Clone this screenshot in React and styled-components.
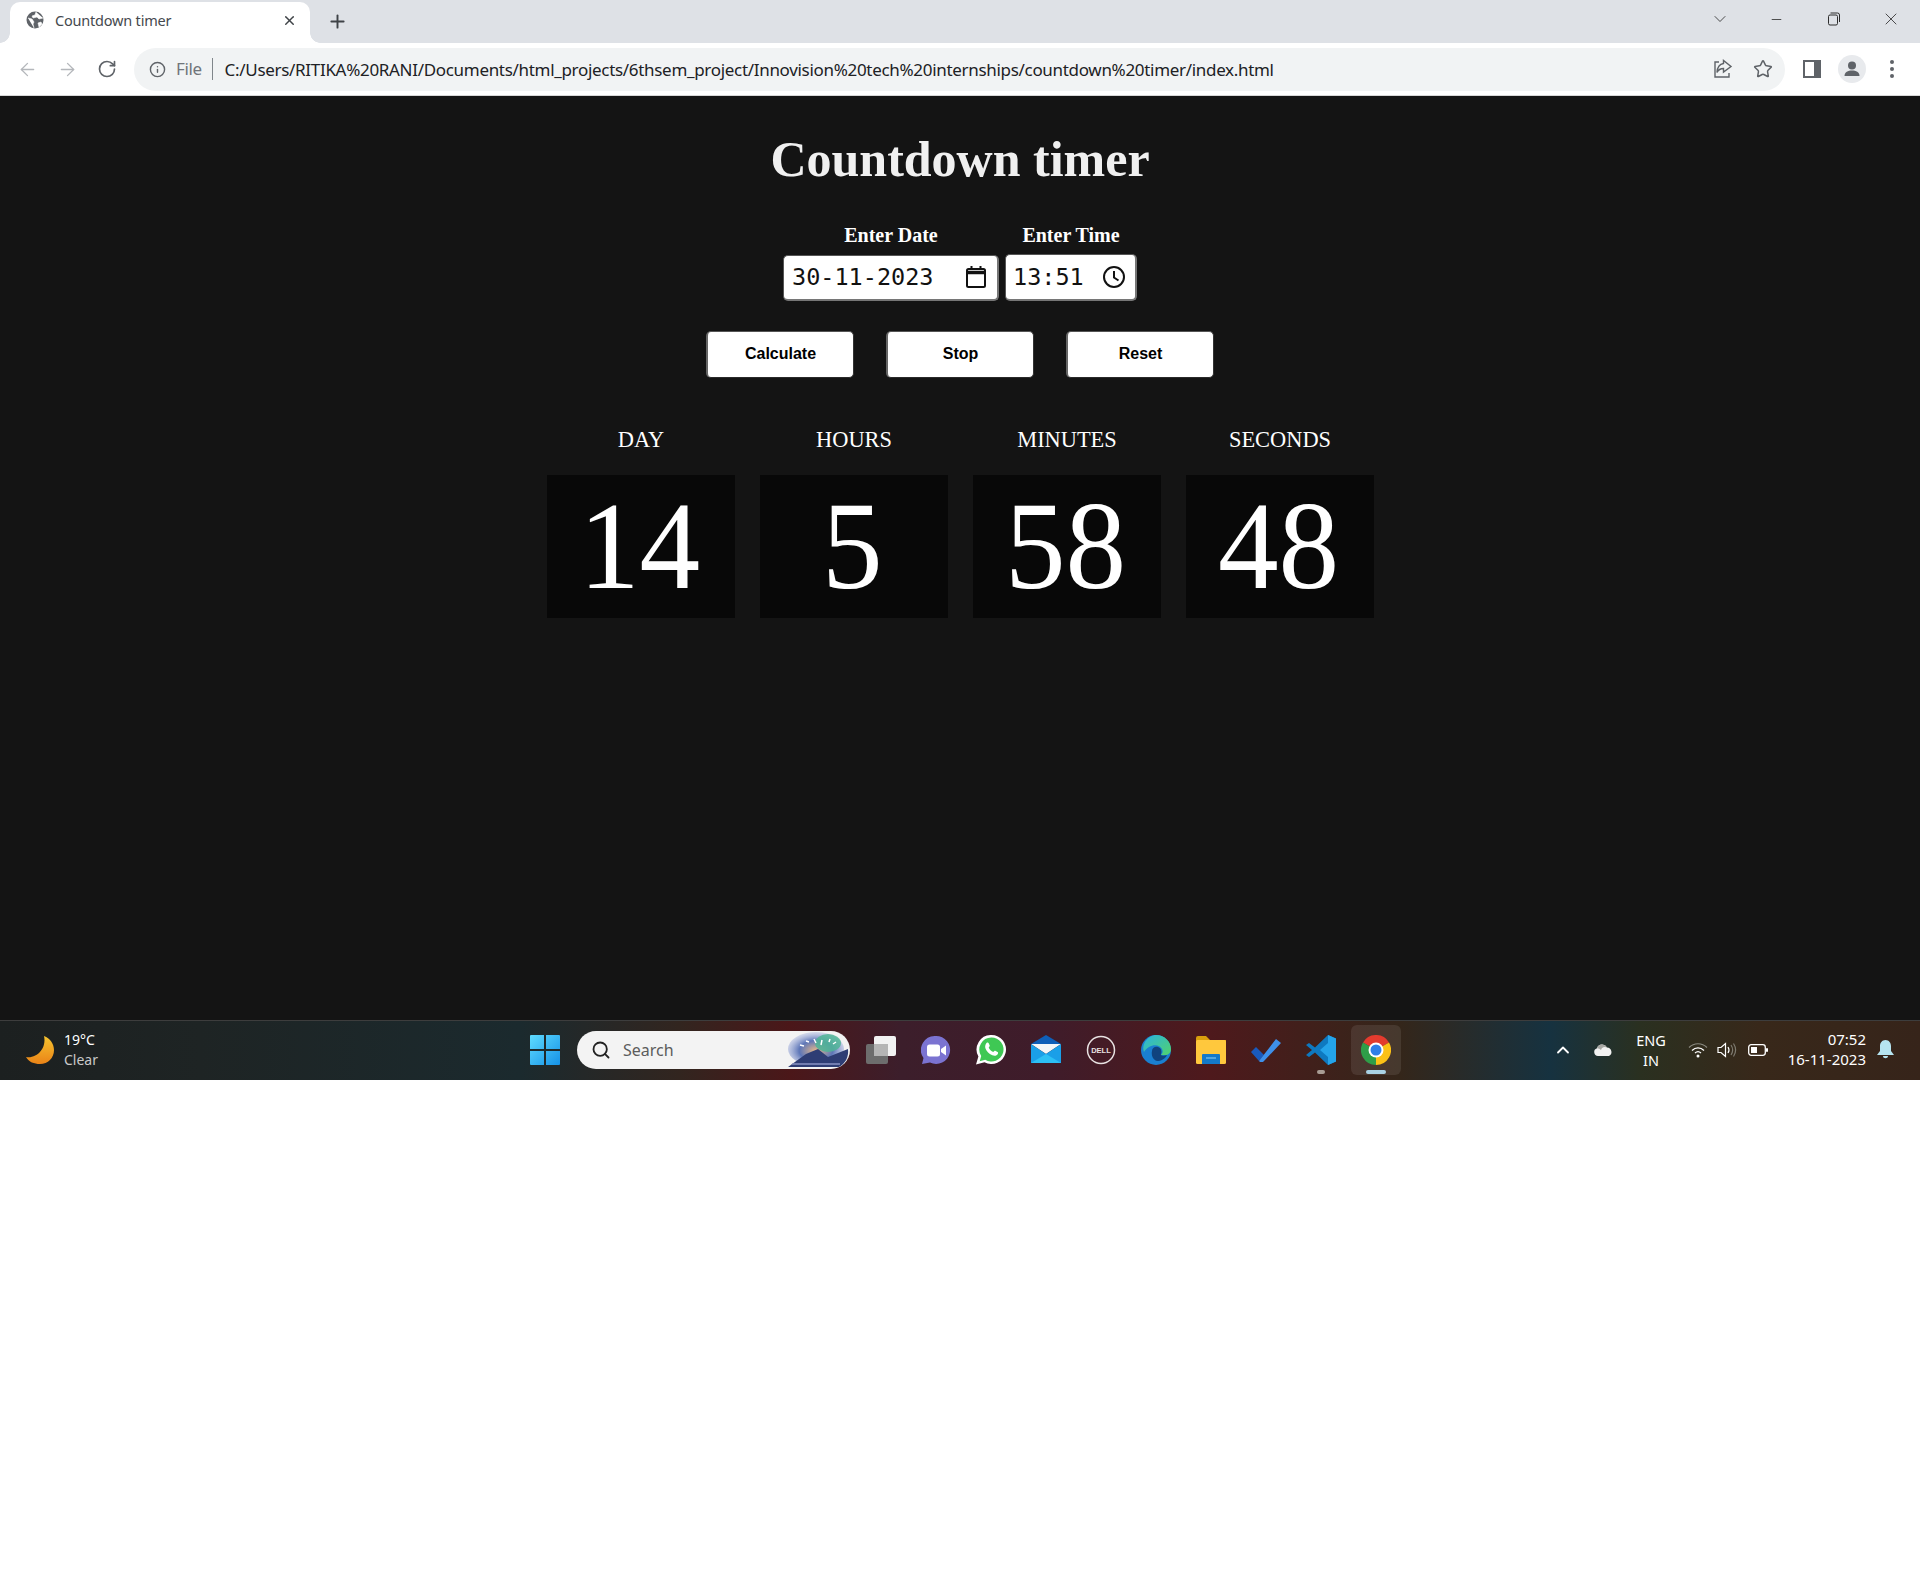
import React from "react"
import styled, { createGlobalStyle } from "styled-components"
import { ArrowLeft, ArrowRight, RotateCw, Info, Star, X, Plus, Minus, ChevronDown, ChevronUp, Search as SearchIcon } from "lucide-react"

const GlobalStyle = createGlobalStyle`
  html, body { margin: 0; padding: 0; background: #fff; }
  #root { width: 1920px; height: 1596px; overflow: hidden; }
`

const UI_FONT = `"Noto Sans", "Open Sans", sans-serif`

const TabStrip = styled.div`
  height: 43px;
  background: #dee1e6;
  display: flex;
  align-items: flex-end;
  padding-left: 10px;
  position: relative;
`
const Tab = styled.div`
  position: relative;
  width: 300px;
  height: 41px;
  background: #fff;
  border-radius: 10px 10px 0 0;
  display: flex;
  align-items: center;
  padding: 0 13px 5px 16px;
  box-sizing: border-box;
  gap: 11px;
  font: 400 14.5px ${UI_FONT};
  color: #45494e;
  &::before, &::after {
    content: "";
    position: absolute;
    bottom: 0;
    width: 10px;
    height: 10px;
    background: radial-gradient(circle at 0 0, #dee1e6 9.5px, #fff 10px);
  }
  &::before { left: -10px; }
  &::after { right: -10px; background: radial-gradient(circle at 100% 0, #dee1e6 9.5px, #fff 10px); }
`
const TabTitle = styled.span`
  flex: 1;
  letter-spacing: -0.2px;
`
const NewTab = styled.div`
  margin: 0 0 3px 17px;
  height: 38px;
  display: flex;
  align-items: center;
  color: #3f4347;
`
const WindowControls = styled.div`
  margin-left: auto;
  height: 43px;
  display: flex;
  align-items: flex-start;
  color: #2c2c2c;
`
const WindowButton = styled.div`
  width: ${p => p.$w || 57}px;
  height: 38px;
  display: flex;
  align-items: center;
  justify-content: center;
`
const Toolbar = styled.div`
  height: 52px;
  background: #fff;
  display: flex;
  align-items: center;
  border-bottom: 1px solid #d8d8d8;
  padding-left: 7px;
  color: #5f6368;
`
const NavButton = styled.div`
  width: 40px;
  display: flex;
  justify-content: center;
  color: ${p => (p.$off ? "#b4b7bb" : "#5f6368")};
`
const Omnibox = styled.div`
  width: 1651px;
  height: 43px;
  margin-left: 7px;
  border-radius: 22px;
  background: #f1f3f4;
  display: flex;
  align-items: center;
  padding-left: 15px;
  box-sizing: border-box;
  font: 400 17px ${UI_FONT};
`
const FileLabel = styled.span`
  margin-left: 10px;
  color: #70757a;
  padding-right: 10px;
  border-right: 1px solid #80868b;
  line-height: 22px;
  letter-spacing: -0.4px;
`
const Url = styled.span`
  margin-left: 12px;
  color: #202124;
  letter-spacing: -0.31px;
  flex: 1;
  white-space: nowrap;
`
const OmniIcons = styled.div`
  display: flex;
  align-items: center;
  gap: 20px;
  padding-right: 12px;
`
const ToolbarIcons = styled.div`
  display: flex;
  align-items: center;
  margin-left: 7px;
`
const ToolIcon = styled.div`
  width: 40px;
  display: flex;
  justify-content: center;
`

const Page = styled.main`
  height: 924px;
  background: #141414;
  display: flex;
  flex-direction: column;
  align-items: center;
  overflow: hidden;
`
const Title = styled.h1`
  margin: 35px 0 0;
  font: 700 50px/1.15 "Liberation Serif", serif;
  color: #f0f0f0;
`
const Fields = styled.div`
  margin-top: 35px;
  display: flex;
  align-items: flex-start;
  gap: 6px;
`
const Field = styled.div`
  display: flex;
  flex-direction: column;
  align-items: center;
`
const FieldLabel = styled.label`
  font: 700 20px/22px "Liberation Serif", serif;
  color: #fff;
  margin-bottom: ${p => p.$gap}px;
`
const Input = styled.div`
  width: ${p => p.$w}px;
  height: ${p => p.$h}px;
  box-sizing: border-box;
  background: #fff;
  border-style: solid;
  border-width: 1px 2px 2px 1px;
  border-color: #555 #767676 #767676 #555;
  border-radius: 5px;
  display: flex;
  align-items: center;
  justify-content: space-between;
  padding: 0 10px 0 ${p => p.$pad}px;
  font: 400 23.5px "DejaVu Sans Mono", monospace;
  color: #111;
`
const Buttons = styled.div`
  margin-top: 30px;
  display: flex;
  gap: 32px;
`
const Button = styled.button`
  width: 148px;
  height: 47px;
  background: #fff;
  border-style: solid;
  border-width: 1px 1px 1px 2px;
  border-color: #555 #333 #2a2a2a #666;
  border-radius: 5px;
  font: 700 16px "Liberation Sans", sans-serif;
  color: #000;
  padding: 0;
`
const Clock = styled.section`
  margin-top: 49px;
  display: grid;
  grid-template-columns: repeat(4, 187.5px);
  column-gap: 25.5px;
  margin-left: 1px;
`
const Unit = styled.div`
  display: flex;
  flex-direction: column;
  align-items: center;
`
const UnitLabel = styled.div`
  font: 400 22.4px/26px "Liberation Serif", serif;
  color: #fff;
  margin-bottom: 22px;
`
const Digits = styled.div`
  width: 100%;
  height: 143px;
  box-sizing: border-box;
  padding-right: 3px;
  background: #080808;
  display: flex;
  align-items: center;
  justify-content: center;
  font: 400 125px/143px "Liberation Serif", serif;
  color: #fff;
`
const DigitText = styled.span`
  display: inline-block;
  transform: scaleX(0.97);
`

const Taskbar = styled.footer`
  height: 60px;
  box-sizing: border-box;
  border-top: 1px solid #3d3d3d;
  padding-bottom: 2px;
  display: flex;
  align-items: center;
  background: linear-gradient(90deg, #1c2020 0, #1e2424 200px, #1b2a2e 520px, #32251f 680px, #4b1719 790px, #3c1e2b 900px, #3f1c2a 1050px, #4e191c 1210px, #34261a 1400px, #163240 1550px, #2a3020 1640px, #38281a 1760px, #36241a 1920px);
  color: #fff;
  font: 400 14px/20px ${UI_FONT};
`
const Weather = styled.div`
  width: 530px;
  flex: none;
  box-sizing: border-box;
  padding-left: 26px;
  display: flex;
  align-items: center;
  gap: 10px;
`
const WeatherText = styled.div`
  line-height: 20px;
  span { display: block; }
  span + span { color: #c9c9c9; }
`
const StartIcon = styled.div`
  width: 47px;
  display: flex;
  flex: none;
`
const SearchBox = styled.div`
  width: 273px;
  height: 38px;
  box-sizing: border-box;
  border-radius: 19px;
  background: #f3f3f3;
  color: #5c5c5c;
  display: flex;
  align-items: center;
  padding-left: 14px;
  gap: 12px;
  font-size: 16px;
  overflow: hidden;
  flex: none;
`
const SearchArt = styled.div`
  margin-left: auto;
  display: flex;
`
const AppSlot = styled.div`
  position: relative;
  width: 55px;
  height: 50px;
  flex: none;
  display: flex;
  align-items: center;
  justify-content: center;
  &::before {
    content: "";
    display: ${p => (p.$active ? "block" : "none")};
    position: absolute;
    inset: 0 2.5px;
    border-radius: 6px;
    background: rgba(255, 255, 255, 0.09);
  }
  svg { position: relative; }
  &::after {
    content: "";
    display: ${p => (p.$dot ? "block" : "none")};
    position: absolute;
    bottom: 1px;
    left: 50%;
    transform: translateX(-50%);
    width: ${p => (p.$dot === "wide" ? 20 : 8)}px;
    height: 4px;
    border-radius: 2px;
    background: ${p => (p.$dot === "wide" ? "#a9d2e4" : "#a89c94")};
  }
`
const Apps = styled.div`
  display: flex;
  align-items: center;
  margin-left: 3px;
`
const Tray = styled.div`
  margin-left: auto;
  display: flex;
  align-items: center;
  padding-right: 16px;
`
const TrayIcon = styled.div`
  display: flex;
  width: ${p => p.$w}px;
  justify-content: center;
  flex: none;
`
const Lang = styled.div`
  width: 56px;
  flex: none;
  text-align: center;
  font-size: 14.5px;
  line-height: 20px;
`
const DateTime = styled.div`
  width: 87px;
  flex: none;
  text-align: right;
  font-size: 15px;
  line-height: 20px;
  white-space: nowrap;
  padding-bottom: 2px;
`
const Rest = styled.div`
  height: 516px;
  background: #fff;
`

const Globe = () => (
  <svg width="18" height="18" viewBox="0 0 18 18">
    <circle cx="9" cy="9" r="8.5" fill="#5f6368" />
    <path d="M2 7l4 1 2 3-1 2 1 4M10 1l-1 3-3 1 1 2 4-1 2 2 4-1M12 12l3-1 1 2-3 3z" fill="#fff" stroke="#fff" strokeWidth=".6" />
  </svg>
)
const Restore = () => (
  <svg width="14" height="14" viewBox="0 0 14 14" fill="none" stroke="#2c2c2c" strokeWidth="1">
    <rect x="1.5" y="3" width="9" height="10" rx="1.5" />
    <path d="M3.5 1h7a2 2 0 0 1 2 2v7" />
  </svg>
)
const Share = () => (
  <svg width="20" height="20" viewBox="0 0 20 20" fill="none" stroke="#5f6368" strokeWidth="1.4">
    <path d="M6 3H2v15h14v-4" />
    <path d="M10.5 4.5V1.5l7.5 6-7.5 5.5V9.5c-3 0-5 1-6.5 4 .3-5 3-8.5 6.5-9z" />
  </svg>
)
const Panel = () => (
  <svg width="18" height="18" viewBox="0 0 18 18">
    <path fillRule="evenodd" d="M0 0h18v18H0zM2 2v14h9V2z" fill="#5f6368" />
  </svg>
)
const Avatar = () => (
  <svg width="28" height="28" viewBox="0 0 28 28">
    <circle cx="14" cy="14" r="14" fill="#e8eaed" />
    <circle cx="14" cy="10.5" r="4" fill="#5f6368" />
    <path d="M6.5 21c0-4 3.5-5.500 7.500-5.500s7.500 1.500 7.500 5.500z" fill="#5f6368" />
  </svg>
)
const Dots = () => (
  <svg width="6" height="20" viewBox="0 0 6 20" fill="#5f6368">
    <circle cx="3" cy="3" r="2" />
    <circle cx="3" cy="10" r="2" />
    <circle cx="3" cy="17" r="2" />
  </svg>
)
const Calendar = () => (
  <svg width="22" height="24" viewBox="0 0 22 24" fill="none" stroke="#111" strokeWidth="2">
    <rect x="2" y="4" width="18" height="18" rx="1.5" />
    <path d="M2 7.500h18" strokeWidth="3.500" />
    <path d="M6.500 1v4M15.500 1v4" />
  </svg>
)
const ClockIcon = () => (
  <svg width="22" height="22" viewBox="0 0 22 22" fill="none" stroke="#111" strokeWidth="2">
    <circle cx="11" cy="11" r="10" />
    <path d="M11 5v6.500l4.500 3" />
  </svg>
)
const Moon = () => (
  <svg width="28" height="28" viewBox="0 0 28 28">
    <defs>
      <linearGradient id="moon" x1="0" y1="0" x2="0" y2="1">
        <stop offset="0" stopColor="#f6c42f" />
        <stop offset="1" stopColor="#ea8317" />
      </linearGradient>
    </defs>
    <path d="M18 0c6 2 10 8 10 14 0 8-6 14-14 14C8 28 3 26 0 21c10 2 21-8 18-21z" fill="url(#moon)" />
  </svg>
)
const WinLogo = () => (
  <svg width="30" height="30" viewBox="0 0 30 30">
    <defs>
      <linearGradient id="win" x1="0" y1="0" x2="1" y2="1">
        <stop offset="0" stopColor="#5fdcff" />
        <stop offset="1" stopColor="#1591e6" />
      </linearGradient>
    </defs>
    <path d="M0 1a1 1 0 0 1 1-1h13v14H0zM16 0h13a1 1 0 0 1 1 1v13H16zM0 16h14v14H1a1 1 0 0 1-1-1zM16 16h14v13a1 1 0 0 1-1 1H16z" fill="url(#win)" />
  </svg>
)
const SearchDecor = () => (
  <svg width="64" height="38" viewBox="0 0 64 38">
    <defs>
      <radialGradient id="sky" cx=".5" cy=".55" r=".6">
        <stop offset="0" stopColor="#e8b98a" />
        <stop offset=".5" stopColor="#5d76b8" />
        <stop offset="1" stopColor="#bcc4e8" stopOpacity=".3" />
      </radialGradient>
    </defs>
    <ellipse cx="30" cy="18" rx="28" ry="17" fill="url(#sky)" />
    <ellipse cx="42" cy="12" rx="13" ry="9" fill="#4fb596" opacity=".85" />
    <path d="M20 10l3 1M28 8l2 4M36 9l-1 5M44 8l-1 3M50 11l-3 2M14 14l4 1" stroke="#fff" strokeWidth="1.500" />
    <path d="M2 36l18-13 12-5 10 8 20-8c1 8-3 15-9 18z" fill="#2e3d74" />
    <path d="M6 33h48" stroke="#8a93c5" strokeWidth="1.500" />
  </svg>
)
const TaskView = () => (
  <svg width="30" height="28" viewBox="0 0 30 28">
    <rect x="0" y="8" width="22" height="20" rx="2" fill="#6d6d6d" />
    <rect x="8" y="0" width="22" height="20" rx="2" fill="#f2f2f2" />
    <rect x="8" y="8" width="14" height="12" fill="#b5b5b5" />
  </svg>
)
const Meet = () => (
  <svg width="30" height="30" viewBox="0 0 30 30">
    <path d="M15 1a14 14 0 1 1-6 26.600L1 29l1.500-6A14 14 0 0 1 15 1z" fill="#7b73d1" />
    <rect x="6" y="9.500" width="13" height="12" rx="2.500" fill="#fff" />
    <path d="M20 14l5-3.500v10L20 17z" fill="#fff" />
  </svg>
)
const WhatsApp = () => (
  <svg width="30" height="30" viewBox="0 0 30 30">
    <path d="M15.500 0a14.500 14.500 0 1 1-7 27.200L0 29.500l2.400-8A14.500 14.500 0 0 1 15.500 0z" fill="#fff" />
    <path d="M15.500 2.500a12 12 0 1 1-6.300 22.200l-5.500 1.500 1.500-5.300A12 12 0 0 1 15.500 2.500z" fill="#3fc854" />
    <path d="M10.500 8c1-.8 1.800-.5 2.200.3l1 2.200c.2.600-.5 1.300-1 2 .8 2 2.500 3.600 4.600 4.500.7-.7 1.300-1.500 2-1.200l2.200 1.100c.7.300.8 1 .3 2-1 1.700-3 2.200-5.500 1.300-3.500-1.300-6-4-7-7.200-.4-2 .2-3.900 1.200-5z" fill="#fff" />
  </svg>
)
const Mail = () => (
  <svg width="30" height="30" viewBox="0 0 30 30">
    <path d="M15 0l15 9H0z" fill="#0f5fb8" />
    <path d="M0 9h30L15 19z" fill="#f4f6f8" />
    <path d="M0 9l15 10L30 9v19H0z" fill="#1a9fe8" />
    <path d="M0 28l15-9 15 9z" fill="#2cc0f5" />
  </svg>
)
const Dell = () => (
  <svg width="30" height="30" viewBox="0 0 30 30">
    <circle cx="15" cy="15" r="13.500" fill="none" stroke="#e8e2e2" strokeWidth="1.500" />
    <text x="15" y="17.500" textAnchor="middle" fontFamily="Liberation Sans, sans-serif" fontWeight="700" fontSize="7.500" fill="#e8e2e2">DELL</text>
  </svg>
)
const Edge = () => (
  <svg width="30" height="30" viewBox="0 0 30 30">
    <defs>
      <linearGradient id="edgeA" x1="0" y1="0" x2="1" y2="1">
        <stop offset="0" stopColor="#2ab3e0" />
        <stop offset="1" stopColor="#52d26c" />
      </linearGradient>
    </defs>
    <circle cx="15" cy="15" r="15" fill="#1a7fd0" />
    <path d="M3 9C6 2 12 0 15 0c9 0 15 7 15 14 0 4-3 6-6 6h-4c2-2 2-4 1-6-2-4-8-5-13-2-2 1-4 3-5 5-1-3-1-5 0-8z" fill="url(#edgeA)" />
    <path d="M11 16c0-3 3-5 6-4 3 1 4 4 3 7-1 2 3 2 6 1-2 4-6 6-10 6-4-1-6-6-5-10z" fill="#10437e" />
  </svg>
)
const Folder = () => (
  <svg width="30" height="28" viewBox="0 0 30 28">
    <path d="M0 2a2 2 0 0 1 2-2h8l4 4h16v4H0z" fill="#d99e0d" />
    <rect x="0" y="4" width="30" height="24" rx="1.500" fill="#ffc83d" />
    <path d="M6 19a1 1 0 0 1 1-1h16a1 1 0 0 1 1 1v9H6z" fill="#1479c9" />
    <path d="M10 22h10" stroke="#7cc4ee" strokeWidth="1.200" />
  </svg>
)
const Todo = () => (
  <svg width="30" height="24" viewBox="0 0 30 24">
    <path d="M0 14l5-5 8 8-5 6z" fill="#195abd" />
    <path d="M8 23L25 1l5 4-17 18a3 3 0 0 1-5 0z" fill="#3e90ea" />
  </svg>
)
const VSCode = () => (
  <svg width="30" height="30" viewBox="0 0 30 30">
    <path d="M22 0l8 3.500v23L22 30 9 17.500 3 22l-3-2 6-5-6-5 3-2 6 4.500z" fill="#0e79c0" />
    <path d="M22 0l8 3.500v23L22 30zM22 8l-8 7 8 7z" fill="#24a4ea" fillRule="evenodd" />
  </svg>
)
const Chrome = () => (
  <svg width="30" height="30" viewBox="0 0 30 30">
    <path d="M15 15L2 7.500A15 15 0 0 1 28 7.500z" fill="#e33b2e" />
    <path d="M15 15L2 7.500A15 15 0 0 0 15 30z" fill="#2f9e48" />
    <path d="M15 15L28 7.500A15 15 0 0 1 15 30z" fill="#fbc116" />
    <circle cx="15" cy="15" r="7.500" fill="#fff" />
    <circle cx="15" cy="15" r="5.500" fill="#2f7fe8" />
  </svg>
)
const Cloud = () => (
  <svg width="20" height="14" viewBox="0 0 20 14">
    <path d="M5 13a4 4 0 0 1-1-7.800 5.500 5.500 0 0 1 10-.7A4.500 4.500 0 0 1 16 13z" fill="#f2f2f2" />
    <path d="M4 5.200a5.500 5.500 0 0 1 10-.7 4 4 0 0 0-6 2.500 5 5 0 0 0-4-1.800z" fill="#a8a8a4" />
  </svg>
)
const Wifi = () => (
  <svg width="20" height="16" viewBox="0 0 20 16" fill="none" stroke="#fff">
    <path d="M1 5.500c5-5 13-5 18 0" stroke="#8a8a80" strokeWidth="1.200" />
    <path d="M4 8.500c3.500-3.500 8.500-3.500 12 0M7 11c1.800-1.600 4.200-1.600 6 0" strokeWidth="1.300" />
    <circle cx="10" cy="14" r="1.500" fill="#fff" stroke="none" />
  </svg>
)
const Volume = () => (
  <svg width="20" height="16" viewBox="0 0 20 16" fill="none" stroke="#fff" strokeWidth="1.200">
    <path d="M1 5.500h3L8.500 1.500v13L4 10.500H1z" />
    <path d="M11 5c1.200 1.800 1.200 4.200 0 6" />
    <path d="M14 3c2 3 2 7 0 10M16.500 1.500c2.600 4 2.600 9 0 13" stroke="#7d7a70" />
  </svg>
)
const Battery = () => (
  <svg width="20" height="14" viewBox="0 0 20 14">
    <rect x=".7" y="1.700" width="16.600" height="10.600" rx="2.500" fill="none" stroke="#fff" strokeWidth="1.300" />
    <rect x="3" y="4" width="6" height="6" fill="#fff" />
    <rect x="18" y="5" width="2" height="4" rx="1" fill="#fff" />
  </svg>
)
const Bell = () => (
  <svg width="17" height="19" viewBox="0 0 17 19" fill="#b6e4f0">
    <path d="M8.500 0C12 0 14 3 14 6v5l3 4H0l3-4V6c0-3 2-6 5.500-6z" />
    <path d="M6 16h5c0 3-5 3-5 0z" />
  </svg>
)

const units = [
  { label: "DAY", value: 14 },
  { label: "HOURS", value: 5 },
  { label: "MINUTES", value: 58 },
  { label: "SECONDS", value: 48 },
]

const apps = [
  { icon: <Meet /> },
  { icon: <WhatsApp /> },
  { icon: <Mail /> },
  { icon: <Dell /> },
  { icon: <Edge /> },
  { icon: <Folder /> },
  { icon: <Todo /> },
  { icon: <VSCode />, dot: "small" },
  { icon: <Chrome />, dot: "wide", active: true },
]

const App = () => {
  return (
    <>
      <GlobalStyle />
      <TabStrip>
        <Tab>
          <Globe />
          <TabTitle>Countdown timer</TabTitle>
          <X size={15} color="#3f4347" strokeWidth={2.4} />
        </Tab>
        <NewTab>
          <Plus size={21} strokeWidth={2.2} />
        </NewTab>
        <WindowControls>
          <WindowButton><ChevronDown size={20} strokeWidth={1} /></WindowButton>
          <WindowButton><Minus size={15} strokeWidth={1.300} /></WindowButton>
          <WindowButton><Restore /></WindowButton>
          <WindowButton $w={58}><X size={20} strokeWidth={1} /></WindowButton>
        </WindowControls>
      </TabStrip>
      <Toolbar>
        <NavButton $off><ArrowLeft size={21} strokeWidth={1.500} /></NavButton>
        <NavButton $off><ArrowRight size={21} strokeWidth={1.500} /></NavButton>
        <NavButton><RotateCw size={20} strokeWidth={2} /></NavButton>
        <Omnibox>
          <Info size={17} strokeWidth={2} color="#5f6368" />
          <FileLabel>File</FileLabel>
          <Url>C:/Users/RITIKA%20RANI/Documents/html_projects/6thsem_project/Innovision%20tech%20internships/countdown%20timer/index.html</Url>
          <OmniIcons>
            <Share />
            <Star size={20} strokeWidth={1.800} color="#5f6368" />
          </OmniIcons>
        </Omnibox>
        <ToolbarIcons>
          <ToolIcon><Panel /></ToolIcon>
          <ToolIcon><Avatar /></ToolIcon>
          <ToolIcon><Dots /></ToolIcon>
        </ToolbarIcons>
      </Toolbar>
      <Page>
        <Title>Countdown timer</Title>
        <Fields>
          <Field>
            <FieldLabel $gap={9}>Enter Date</FieldLabel>
            <Input $w={216} $h={46} $pad={8}>
              30-11-2023
              <Calendar />
            </Input>
          </Field>
          <Field>
            <FieldLabel $gap={8}>Enter Time</FieldLabel>
            <Input $w={132} $h={47} $pad={7}>
              13:51
              <ClockIcon />
            </Input>
          </Field>
        </Fields>
        <Buttons>
          <Button>Calculate</Button>
          <Button>Stop</Button>
          <Button>Reset</Button>
        </Buttons>
        <Clock>
          {units.map(unit => (
            <Unit key={unit.label}>
              <UnitLabel>{unit.label}</UnitLabel>
              <Digits><DigitText>{unit.value}</DigitText></Digits>
            </Unit>
          ))}
        </Clock>
      </Page>
      <Taskbar>
        <Weather>
          <Moon />
          <WeatherText>
            <span>19°C</span>
            <span>Clear</span>
          </WeatherText>
        </Weather>
        <StartIcon><WinLogo /></StartIcon>
        <SearchBox>
          <SearchIcon size={20} strokeWidth={2.200} color="#222" />
          Search
          <SearchArt><SearchDecor /></SearchArt>
        </SearchBox>
        <Apps>
          <AppSlot><TaskView /></AppSlot>
          {apps.map((app, index) => (
            <AppSlot key={index} $dot={app.dot} $active={app.active}>{app.icon}</AppSlot>
          ))}
        </Apps>
        <Tray>
          <TrayIcon $w={40}><ChevronUp size={20} strokeWidth={2.200} color="#fff" /></TrayIcon>
          <TrayIcon $w={40}><Cloud /></TrayIcon>
          <Lang>ENG<br />IN</Lang>
          <TrayIcon $w={38}><Wifi /></TrayIcon>
          <TrayIcon $w={20}><Volume /></TrayIcon>
          <TrayIcon $w={42}><Battery /></TrayIcon>
          <DateTime>07:52<br />16-11-2023</DateTime>
          <TrayIcon $w={38}><Bell /></TrayIcon>
        </Tray>
      </Taskbar>
      <Rest />
    </>
  )
}

export default App
